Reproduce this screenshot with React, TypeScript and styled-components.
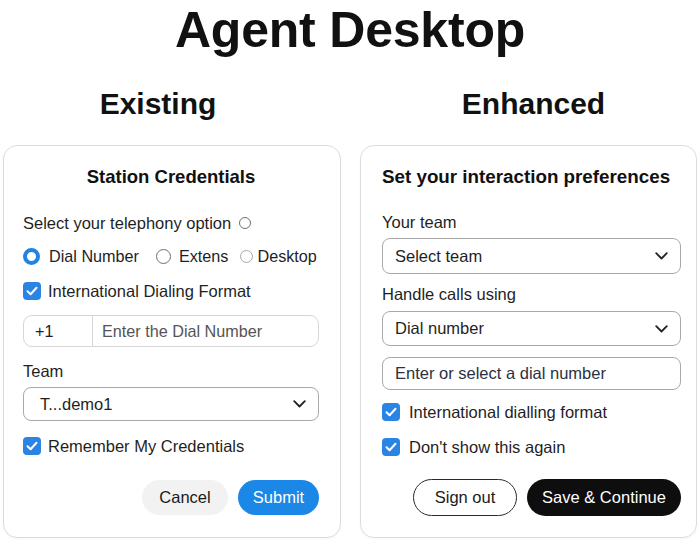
import styled, { createGlobalStyle } from "styled-components";

const GlobalStyle = createGlobalStyle`
    * { box-sizing: border-box; }
    body {
        margin: 0;
        background: #fff;
        font-family: "Liberation Sans", Arial, Helvetica, sans-serif;
        color: #1f1f1f;
    }
`;

const Page = styled.div`
    width: 700px;
    height: 543px;
    padding: 2px 3px 0;
    overflow: hidden;
`;

const Title = styled.h1`
    margin: 0;
    font-size: 50px;
    line-height: 56px;
    font-weight: 700;
    text-align: center;
    letter-spacing: -0.2px;
    color: #111;
`;

const Columns = styled.div`
    display: grid;
    grid-template-columns: 338px 337px;
    column-gap: 19px;
    margin-top: 28px;
`;

const Column = styled.section`
    display: flex;
    flex-direction: column;
`;

const Heading = styled.h2<{ $shift?: number }>`
    margin: 0 0 23px;
    font-size: 30px;
    line-height: 36px;
    font-weight: 700;
    text-align: center;
    color: #111;
    transform: translateX(${p => p.$shift ?? 0}px);
`;

const Card = styled.div<{ $pl: number; $pr: number }>`
    height: 393px;
    border: 1px solid #dcdcdc;
    border-radius: 14px;
    padding: 19px ${p => p.$pr}px 0 ${p => p.$pl}px;
    display: flex;
    flex-direction: column;
    box-shadow: 0 1px 2px rgba(0, 0, 0, 0.04);
`;

const CardTitle = styled.div<{ $center?: boolean; $size: number }>`
    font-size: ${p => p.$size}px;
    line-height: 24px;
    font-weight: 700;
    color: #111;
    white-space: nowrap;
    text-align: ${p => (p.$center ? "center" : "left")};
`;

const Text = styled.div<{ $mt: number }>`
    margin-top: ${p => p.$mt}px;
    font-size: 16.5px;
    line-height: 24px;
    display: flex;
    align-items: center;
`;

const Row = styled.div<{ $mt: number }>`
    margin-top: ${p => p.$mt}px;
    height: 24px;
    display: flex;
    align-items: center;
    font-size: 16.2px;
`;

const RadioOption = styled.label<{ $gap: number; $after: number }>`
    display: flex;
    align-items: center;
    gap: ${p => p.$gap}px;
    margin-right: ${p => p.$after}px;
    white-space: nowrap;
`;

const Radio = styled.span<{ $size: number; $tone: "on" | "dark" | "light" }>`
    display: inline-block;
    width: ${p => p.$size}px;
    height: ${p => p.$size}px;
    border-radius: 50%;
    flex: none;
    background: #fff;
    border: ${p =>
        p.$tone === "on"
            ? "4px solid #2383e2"
            : p.$tone === "dark"
            ? "1.5px solid #6f6f6f"
            : "1.2px solid #a8a8a8"};
`;

const CheckRow = styled.label<{ $mt: number; $gap: number }>`
    margin-top: ${p => p.$mt}px;
    height: 24px;
    display: flex;
    align-items: center;
    gap: ${p => p.$gap}px;
    font-size: 16.5px;
`;

const Box = styled.span`
    width: 18px;
    height: 18px;
    border-radius: 4px;
    background: #2a84e4;
    display: inline-flex;
    align-items: center;
    justify-content: center;
    flex: none;
`;

const InputGroup = styled.div`
    margin-top: 12px;
    height: 32px;
    border: 1px solid #d6d6d6;
    border-radius: 9px;
    display: flex;
    align-items: center;
    font-size: 16.2px;
`;

const Prefix = styled.div`
    width: 69px;
    height: 100%;
    border-right: 1px solid #d6d6d6;
    display: flex;
    align-items: center;
    padding-left: 11px;
    color: #222;
`;

const Placeholder = styled.div<{ $color: string }>`
    padding-left: 9px;
    color: ${p => p.$color};
`;

const Select = styled.div<{ $mt: number; $h: number; $pl: number }>`
    margin-top: ${p => p.$mt}px;
    height: ${p => p.$h}px;
    border: 1.3px solid #a9a9a9;
    border-radius: 8px;
    display: flex;
    align-items: center;
    justify-content: space-between;
    padding: 0 12px 0 ${p => p.$pl}px;
    font-size: 16.5px;
    color: #1f1f1f;
`;

const TextField = styled.div`
    margin-top: 11px;
    height: 33px;
    border: 1.3px solid #a9a9a9;
    border-radius: 8px;
    display: flex;
    align-items: center;
    padding-left: 12px;
    font-size: 16.5px;
    color: #2a3242;
`;

const Actions = styled.div<{ $mt: number }>`
    margin-top: ${p => p.$mt}px;
    display: flex;
    justify-content: flex-end;
    gap: 10px;
`;

const Button = styled.button<{ $kind: "soft" | "blue" | "outline" | "dark"; $w: number; $h: number }>`
    width: ${p => p.$w}px;
    height: ${p => p.$h}px;
    border-radius: 999px;
    font-family: inherit;
    font-size: 16.5px;
    padding: 0;
    cursor: pointer;
    border: ${p => (p.$kind === "outline" ? "1.3px solid #2b2b2b" : "none")};
    background: ${p =>
        p.$kind === "soft"
            ? "#f2f2f2"
            : p.$kind === "blue"
            ? "#1b87e6"
            : p.$kind === "dark"
            ? "#0e0e0e"
            : "#fff"};
    color: ${p => (p.$kind === "blue" || p.$kind === "dark" ? "#fff" : "#1a1a1a")};
`;

const Check = () => (
    <Box>
        <svg width="12" height="10" viewBox="0 0 12 10">
            <path d="M1.5 5.2 4.6 8.2 10.5 1.8" fill="none" stroke="#fff" strokeWidth="2" strokeLinecap="round" strokeLinejoin="round" />
        </svg>
    </Box>
);

const Chevron = () => (
    <svg width="13" height="8" viewBox="0 0 13 8">
        <path d="M1.2 1.2 6.5 6.5 11.8 1.2" fill="none" stroke="#222" strokeWidth="1.8" strokeLinecap="round" strokeLinejoin="round" />
    </svg>
);

export default function App() {
    return (
        <Page>
            <GlobalStyle />
            <Title>Agent Desktop</Title>
            <Columns>
                <Column>
                    <Heading $shift={-14}>Existing</Heading>
                    <Card $pl={19} $pr={21}>
                        <CardTitle $center $size={18.5}>Station Credentials</CardTitle>
                        <Text $mt={22}>
                            Select your telephony option
                            <Radio $size={12} $tone="dark" style={{ marginLeft: 8 }} />
                        </Text>
                        <Row $mt={9}>
                            <RadioOption $gap={9} $after={17}>
                                <Radio $size={17} $tone="on" />
                                Dial Number
                            </RadioOption>
                            <RadioOption $gap={8} $after={12}>
                                <Radio $size={15} $tone="dark" />
                                Extens
                            </RadioOption>
                            <RadioOption $gap={4} $after={0}>
                                <Radio $size={13} $tone="light" />
                                Desktop
                            </RadioOption>
                        </Row>
                        <CheckRow $mt={11} $gap={7}>
                            <Check />
                            International Dialing Format
                        </CheckRow>
                        <InputGroup>
                            <Prefix>+1</Prefix>
                            <Placeholder $color="#555">Enter the Dial Number</Placeholder>
                        </InputGroup>
                        <Text $mt={12}>Team</Text>
                        <Select $mt={4} $h={34} $pl={16}>
                            T...demo1
                            <Chevron />
                        </Select>
                        <CheckRow $mt={13} $gap={7}>
                            <Check />
                            Remember My Credentials
                        </CheckRow>
                        <Actions $mt={22}>
                            <Button $kind="soft" $w={86} $h={35}>Cancel</Button>
                            <Button $kind="blue" $w={81} $h={35}>Submit</Button>
                        </Actions>
                    </Card>
                </Column>
                <Column>
                    <Heading $shift={5}>Enhanced</Heading>
                    <Card $pl={21} $pr={15}>
                        <CardTitle $size={18.8}>Set your interaction preferences</CardTitle>
                        <Text $mt={21}>Your team</Text>
                        <Select $mt={4} $h={36} $pl={12}>
                            Select team
                            <Chevron />
                        </Select>
                        <Text $mt={8}>Handle calls using</Text>
                        <Select $mt={5} $h={35} $pl={12}>
                            Dial number
                            <Chevron />
                        </Select>
                        <TextField>Enter or select a dial number</TextField>
                        <CheckRow $mt={10} $gap={9}>
                            <Check />
                            International dialling format
                        </CheckRow>
                        <CheckRow $mt={11} $gap={9}>
                            <Check />
                            Don't show this again
                        </CheckRow>
                        <Actions $mt={20}>
                            <Button $kind="outline" $w={104} $h={37}>Sign out</Button>
                            <Button $kind="dark" $w={154} $h={37}>Save &amp; Continue</Button>
                        </Actions>
                    </Card>
                </Column>
            </Columns>
        </Page>
    );
}
